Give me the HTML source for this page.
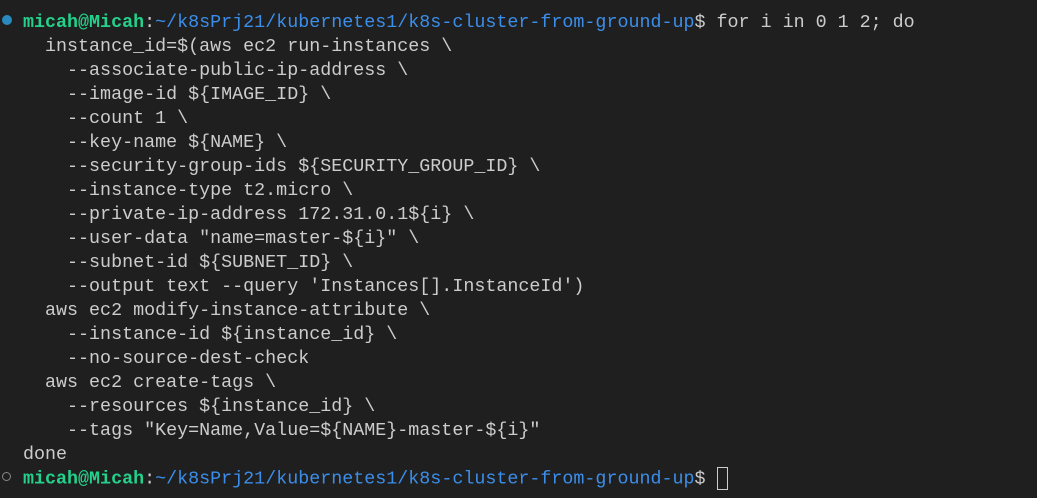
<!DOCTYPE html>
<html><head><style>
html,body{margin:0;padding:0;background:#1f1f1f;width:1037px;height:498px;overflow:hidden}
.t{position:absolute;left:23px;top:11px;font-family:"Liberation Mono",monospace;font-size:18.35px;line-height:24px;color:#cccccc;white-space:pre}
.g{color:#23d18b;font-weight:bold}
.b{color:#3b8eea}
.dot{position:absolute;left:2px;width:10px;height:10px;border-radius:50%}
.cur{display:inline-block;width:11px;height:23px;border:1px solid #cccccc;vertical-align:middle;box-sizing:border-box}
</style></head><body>
<div class="dot" style="top:15px;background:#2a8ac0"></div>
<div class="dot" style="top:472px;border:1.5px solid #888;box-sizing:border-box;width:9px;height:9px"></div>
<div class="t"><span class="g">micah@Micah</span>:<span class="b">~/k8sPrj21/kubernetes1/k8s-cluster-from-ground-up</span>$ for i in 0 1 2; do
  instance_id=$(aws ec2 run-instances \
    --associate-public-ip-address \
    --image-id ${IMAGE_ID} \
    --count 1 \
    --key-name ${NAME} \
    --security-group-ids ${SECURITY_GROUP_ID} \
    --instance-type t2.micro \
    --private-ip-address 172.31.0.1${i} \
    --user-data "name=master-${i}" \
    --subnet-id ${SUBNET_ID} \
    --output text --query 'Instances[].InstanceId')
  aws ec2 modify-instance-attribute \
    --instance-id ${instance_id} \
    --no-source-dest-check
  aws ec2 create-tags \
    --resources ${instance_id} \
    --tags "Key=Name,Value=${NAME}-master-${i}"
done
<span class="g">micah@Micah</span>:<span class="b">~/k8sPrj21/kubernetes1/k8s-cluster-from-ground-up</span>$ <span class="cur"></span></div>
</body></html>
